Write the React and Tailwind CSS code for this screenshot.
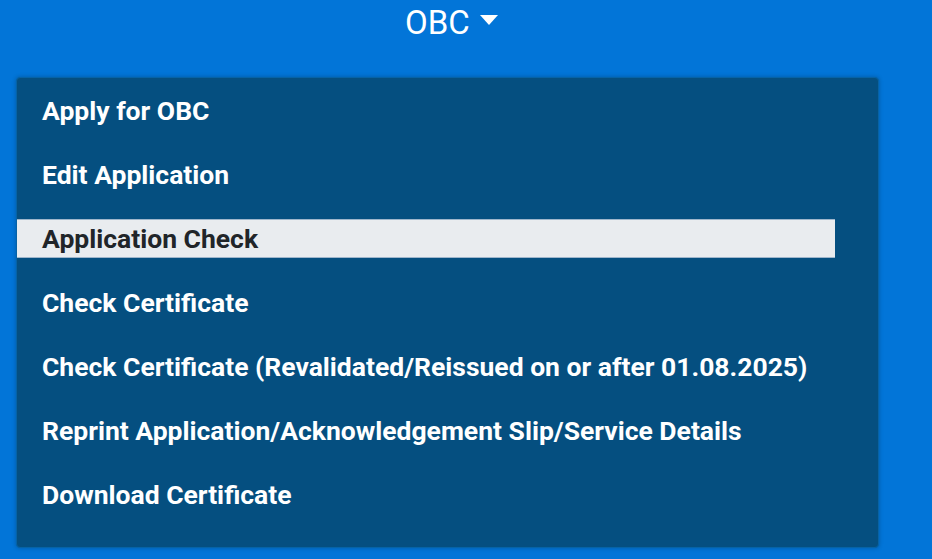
import React from 'react';

const items = [
    'Apply for OBC',
    'Edit Application',
    'Application Check',
    'Check Certificate',
    'Check Certificate (Revalidated/Reissued on or after 01.08.2025)',
    'Reprint Application/Acknowledgement Slip/Service Details',
    'Download Certificate',
];

const App = () => {
    const active = 'Application Check';

    return (
        <div className="w-[932px] h-[559px] bg-[#0275d8] overflow-hidden" style={{ fontFamily: 'Roboto, "Liberation Sans", sans-serif' }}>
            <div className="h-[45px] flex items-center pl-[405px]">
                <span className="text-white text-[33px] leading-none">OBC</span>
                <svg className="ml-[10px] mb-[6px]" width="18" height="10" viewBox="0 0 18 10">
                    <polygon points="0,0 18,0 9,10" fill="#ffffff" />
                </svg>
            </div>

            <div className="mt-[32px] ml-[16px] w-[863px] h-[471px] bg-[#054f80] border border-[#0663a6] rounded-[4px] shadow-[0_0_4px_rgba(0,0,0,0.25)] pt-[13px]">
                <ul className="flex flex-col gap-[25px]">
                    {items.map((item) => (
                        <li
                            key={item}
                            className={
                                item === active
                                    ? 'h-[39px] w-[818px] flex items-center pl-[25px] bg-[#e9ecef] border-y border-[#9fb6cc] text-[#212529] text-[26.5px] font-bold whitespace-nowrap'
                                    : 'h-[39px] w-[818px] flex items-center pl-[25px] text-white text-[26.5px] font-bold whitespace-nowrap'
                            }
                        >
                            {item}
                        </li>
                    ))}
                </ul>
            </div>
        </div>
    );
};

export default App;
